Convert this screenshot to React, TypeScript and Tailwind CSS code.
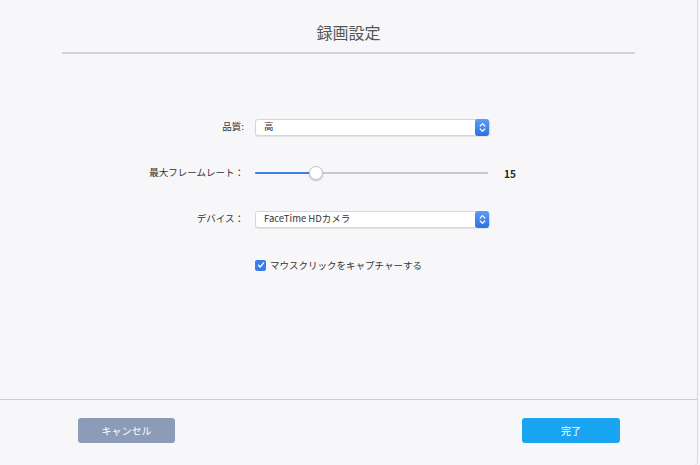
import { useState } from 'react';

const font = { fontFamily: '"Noto Sans CJK JP", "Noto Sans", sans-serif' };

function Stepper() {
  return (
    <div className="flex h-[17px] w-[14px] items-center justify-center rounded-[3px] bg-gradient-to-b from-[#5a9cf8] to-[#2f6fe0]">
      <svg width="7" height="11" viewBox="0 0 7 11" fill="none">
        <path d="M1.2 4 L3.5 1.7 L5.8 4" stroke="white" strokeWidth="1.2" strokeLinecap="round" strokeLinejoin="round" />
        <path d="M1.2 7 L3.5 9.3 L5.8 7" stroke="white" strokeWidth="1.2" strokeLinecap="round" strokeLinejoin="round" />
      </svg>
    </div>
  );
}

function Select({ value }: { value: string }) {
  return (
    <div className="flex h-[17px] w-[235px] items-center justify-between rounded-[3px] border border-[#d6d6d6] bg-white pl-[8px] shadow-[0_1px_1px_rgba(0,0,0,0.08)]">
      <span className="text-[9.5px] leading-none text-[#333]">{value}</span>
      <Stepper />
    </div>
  );
}

function Row({ label, children }: { label: string; children: React.ReactNode }) {
  return (
    <div className="flex h-[20px] items-center">
      <div className="w-[245px] pr-[1px] text-right text-[9.5px] leading-none text-[#333]">{label}</div>
      <div className="ml-[10px] flex items-center">{children}</div>
    </div>
  );
}

export default function App() {
  const [fps] = useState(15);
  const pct = 61;

  return (
    <div className="flex h-[465px] w-[700px] bg-[#f7f7f9]" style={font}>
      <div className="flex h-full w-[698px] flex-col border-r border-[#d8d8dc] rounded-b-[4px]">
        {/* Title */}
        <div className="flex h-[52px] items-center justify-center pt-[12px] text-[16px] text-[#555]">
          録画設定
        </div>
        <div className="mx-[62px] h-[2px] bg-[#d4d4d8]" />

        {/* Form */}
        <div className="flex flex-1 flex-col pt-[63px]">
          <Row label="品質:">
            <Select value="高" />
          </Row>

          <div className="mt-[26px]">
            <Row label="最大フレームレート：">
              <div className="relative flex h-[16px] w-[233px] items-center">
                <div className="h-[2px] w-full rounded-full bg-[#c9c9cc]" />
                <div className="absolute left-0 h-[2px] rounded-full bg-[#3f7fe0]" style={{ width: `${pct}px` }} />
                <div
                  className="absolute h-[14px] w-[14px] rounded-full border border-[#c4c4c8] bg-white shadow-[0_1px_2px_rgba(0,0,0,0.2)]"
                  style={{ left: `${pct - 7}px` }}
                />
              </div>
              <span className="ml-[16px] text-[10px] font-bold text-[#222]">{fps}</span>
            </Row>
          </div>

          <div className="mt-[26px]">
            <Row label="デバイス：">
              <Select value="FaceTime HDカメラ" />
            </Row>
          </div>

          <div className="mt-[29px] flex items-center pl-[255px]">
            <div className="flex h-[11px] w-[11px] items-center justify-center rounded-[2px] bg-[#3b7de8]">
              <svg width="8" height="8" viewBox="0 0 8 8" fill="none">
                <path d="M1.5 4.2 L3.2 6 L6.6 1.8" stroke="white" strokeWidth="1.3" strokeLinecap="round" strokeLinejoin="round" />
              </svg>
            </div>
            <span className="ml-[4px] text-[9.5px] text-[#333]">マウスクリックをキャプチャーする</span>
          </div>
        </div>

        {/* Footer */}
        <div className="h-px bg-[#cfcfd3]" />
        <div className="flex h-[65px] items-start justify-between pl-[78px] pr-[77px] pt-[18px]">
          <button className="h-[25px] w-[97px] rounded-[3px] bg-[#8b9bb8] text-[10px] text-white">
            キャンセル
          </button>
          <button className="h-[25px] w-[98px] rounded-[3px] bg-[#1aa5f2] text-[10px] text-white">
            完了
          </button>
        </div>
      </div>
    </div>
  );
}
